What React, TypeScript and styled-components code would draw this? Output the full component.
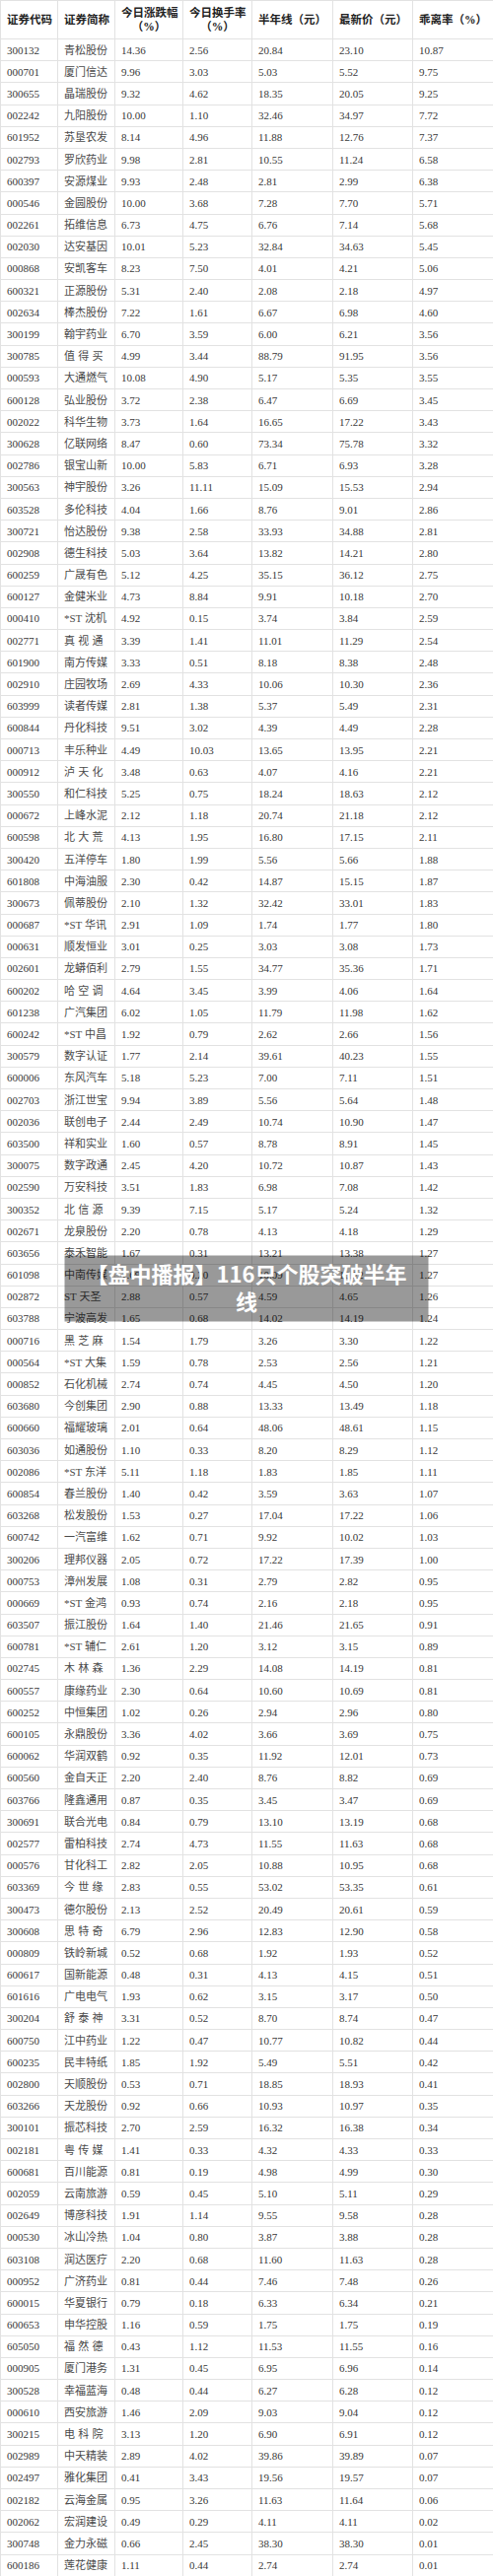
import React from "react";
import styled, { createGlobalStyle } from "styled-components";

const GlobalStyle = createGlobalStyle`
  html, body {
    margin: 0;
    padding: 0;
    background: #fff;
  }
`;

const Page = styled.div`
  position: relative;
  width: 500px;
`;

const Table = styled.table`
  width: 500px;
  border-collapse: collapse;
  table-layout: fixed;
  font-family: "Liberation Serif", "Noto Sans CJK SC", serif;
  color: #383838;
`;

const Col = styled.col<{ $w: number }>`
  width: ${(p) => p.$w}px;
`;

const HeadCell = styled.th`
  height: 38px;
  padding: 0 0 0 6px;
  border: 1px solid #e2e2e2;
  text-align: left;
  vertical-align: middle;
  font-size: 11.5px;
  font-weight: 700;
  line-height: 14px;
  color: #222;
  white-space: nowrap;
  overflow: hidden;
`;

const Unit = styled.span`
  display: block;
  margin-left: -6px;
  text-align: center;
`;

const Cell = styled.td`
  height: 21.2px;
  padding: 0 0 0 6px;
  border: 1px solid #e2e2e2;
  vertical-align: middle;
  font-size: 11px;
  line-height: 14px;
  white-space: nowrap;
  overflow: hidden;
`;

const Name = styled.span<{ $spread: boolean }>`
  display: inline-block;
  width: ${(p) => (p.$spread ? "3.6em" : "auto")};
  color: #4a4a4a;
  text-align: left;
  text-align-last: ${(p) => (p.$spread ? "justify" : "auto")};
`;

const Banner = styled.div`
  position: absolute;
  left: 50%;
  top: 50%;
  transform: translate(-50%, -50%);
  width: 369px;
  box-sizing: border-box;
  padding: 3px 20px 8px;
  background: rgba(0, 0, 0, 0.4);
  color: #fff;
  font-family: "Noto Sans CJK SC", sans-serif;
  font-weight: 700;
  font-size: 22px;
  line-height: 28px;
  text-align: center;
`;

const widths = [58, 58, 69, 70, 82, 81, 82];

const rows = `300132|青松股份|14.36|2.56|20.84|23.10|10.87
000701|厦门信达|9.96|3.03|5.03|5.52|9.75
300655|晶瑞股份|9.32|4.62|18.35|20.05|9.25
002242|九阳股份|10.00|1.10|32.46|34.97|7.72
601952|苏垦农发|8.14|4.96|11.88|12.76|7.37
002793|罗欣药业|9.98|2.81|10.55|11.24|6.58
600397|安源煤业|9.93|2.48|2.81|2.99|6.38
000546|金圆股份|10.00|3.68|7.28|7.70|5.71
002261|拓维信息|6.73|4.75|6.76|7.14|5.68
002030|达安基因|10.01|5.23|32.84|34.63|5.45
000868|安凯客车|8.23|7.50|4.01|4.21|5.06
600321|正源股份|5.31|2.40|2.08|2.18|4.97
002634|棒杰股份|7.22|1.61|6.67|6.98|4.60
300199|翰宇药业|6.70|3.59|6.00|6.21|3.56
300785|值得买|4.99|3.44|88.79|91.95|3.56
000593|大通燃气|10.08|4.90|5.17|5.35|3.55
600128|弘业股份|3.72|2.38|6.47|6.69|3.45
002022|科华生物|3.73|1.64|16.65|17.22|3.43
300628|亿联网络|8.47|0.60|73.34|75.78|3.32
002786|银宝山新|10.00|5.83|6.71|6.93|3.28
300563|神宇股份|3.26|11.11|15.09|15.53|2.94
603528|多伦科技|4.04|1.66|8.76|9.01|2.86
300721|怡达股份|9.38|2.58|33.93|34.88|2.81
002908|德生科技|5.03|3.64|13.82|14.21|2.80
600259|广晟有色|5.12|4.25|35.15|36.12|2.75
600127|金健米业|4.73|8.84|9.91|10.18|2.70
000410|*ST 沈机|4.92|0.15|3.74|3.84|2.59
002771|真视通|3.39|1.41|11.01|11.29|2.54
601900|南方传媒|3.33|0.51|8.18|8.38|2.48
002910|庄园牧场|2.69|4.33|10.06|10.30|2.36
603999|读者传媒|2.81|1.38|5.37|5.49|2.31
600844|丹化科技|9.51|3.02|4.39|4.49|2.28
000713|丰乐种业|4.49|10.03|13.65|13.95|2.21
000912|泸天化|3.48|0.63|4.07|4.16|2.21
300550|和仁科技|5.25|0.75|18.24|18.63|2.12
000672|上峰水泥|2.12|1.18|20.74|21.18|2.12
600598|北大荒|4.13|1.95|16.80|17.15|2.11
300420|五洋停车|1.80|1.99|5.56|5.66|1.88
601808|中海油服|2.30|0.42|14.87|15.15|1.87
300673|佩蒂股份|2.10|1.32|32.42|33.01|1.83
000687|*ST 华讯|2.91|1.09|1.74|1.77|1.80
000631|顺发恒业|3.01|0.25|3.03|3.08|1.73
002601|龙蟒佰利|2.79|1.55|34.77|35.36|1.71
600202|哈空调|4.64|3.45|3.99|4.06|1.64
601238|广汽集团|6.02|1.05|11.79|11.98|1.62
600242|*ST 中昌|1.92|0.79|2.62|2.66|1.56
300579|数字认证|1.77|2.14|39.61|40.23|1.55
600006|东风汽车|5.18|5.23|7.00|7.11|1.51
002703|浙江世宝|9.94|3.89|5.56|5.64|1.48
002036|联创电子|2.44|2.49|10.74|10.90|1.47
603500|祥和实业|1.60|0.57|8.78|8.91|1.45
300075|数字政通|2.45|4.20|10.72|10.87|1.43
002590|万安科技|3.51|1.83|6.98|7.08|1.42
300352|北信源|9.39|7.15|5.17|5.24|1.32
002671|龙泉股份|2.20|0.78|4.13|4.18|1.29
603656|泰禾智能|1.67|0.31|13.21|13.38|1.27
601098|中南传媒|1.69|0.20|10.09|10.22|1.27
002872|ST 天圣|2.88|0.57|4.59|4.65|1.26
603788|宁波高发|1.65|0.68|14.02|14.19|1.24
000716|黑芝麻|1.54|1.79|3.26|3.30|1.22
000564|*ST 大集|1.59|0.78|2.53|2.56|1.21
000852|石化机械|2.74|0.74|4.45|4.50|1.20
603680|今创集团|2.90|0.88|13.33|13.49|1.18
600660|福耀玻璃|2.01|0.64|48.06|48.61|1.15
603036|如通股份|1.10|0.33|8.20|8.29|1.12
002086|*ST 东洋|5.11|1.18|1.83|1.85|1.11
600854|春兰股份|1.40|0.42|3.59|3.63|1.07
603268|松发股份|1.53|0.27|17.04|17.22|1.06
600742|一汽富维|1.62|0.71|9.92|10.02|1.03
300206|理邦仪器|2.05|0.72|17.22|17.39|1.00
000753|漳州发展|1.08|0.31|2.79|2.82|0.95
000669|*ST 金鸿|0.93|0.74|2.16|2.18|0.95
603507|振江股份|1.64|1.40|21.46|21.65|0.91
600781|*ST 辅仁|2.61|1.20|3.12|3.15|0.89
002745|木林森|1.36|2.29|14.08|14.19|0.81
600557|康缘药业|2.30|0.64|10.60|10.69|0.81
600252|中恒集团|1.02|0.26|2.94|2.96|0.80
600105|永鼎股份|3.36|4.02|3.66|3.69|0.75
600062|华润双鹤|0.92|0.35|11.92|12.01|0.73
600560|金自天正|2.20|2.40|8.76|8.82|0.69
603766|隆鑫通用|0.87|0.35|3.45|3.47|0.69
300691|联合光电|0.84|0.79|13.10|13.19|0.68
002577|雷柏科技|2.74|4.73|11.55|11.63|0.68
000576|甘化科工|2.82|2.05|10.88|10.95|0.68
603369|今世缘|2.83|0.55|53.02|53.35|0.61
300473|德尔股份|2.13|2.52|20.49|20.61|0.59
300608|思特奇|6.79|2.96|12.83|12.90|0.58
000809|铁岭新城|0.52|0.68|1.92|1.93|0.52
600617|国新能源|0.48|0.31|4.13|4.15|0.51
601616|广电电气|1.93|0.62|3.15|3.17|0.50
300204|舒泰神|3.31|0.52|8.70|8.74|0.47
600750|江中药业|1.22|0.47|10.77|10.82|0.44
600235|民丰特纸|1.85|1.92|5.49|5.51|0.42
002800|天顺股份|0.53|0.71|18.85|18.93|0.41
603266|天龙股份|0.92|0.66|10.93|10.97|0.35
300101|振芯科技|2.70|2.59|16.32|16.38|0.34
002181|粤传媒|1.41|0.33|4.32|4.33|0.33
600681|百川能源|0.81|0.19|4.98|4.99|0.30
002059|云南旅游|0.59|0.45|5.10|5.11|0.29
002649|博彦科技|1.91|1.14|9.55|9.58|0.28
000530|冰山冷热|1.04|0.80|3.87|3.88|0.28
603108|润达医疗|2.20|0.68|11.60|11.63|0.28
000952|广济药业|0.81|0.44|7.46|7.48|0.26
600015|华夏银行|0.79|0.18|6.33|6.34|0.21
600653|申华控股|1.16|0.59|1.75|1.75|0.19
605050|福然德|0.43|1.12|11.53|11.55|0.16
000905|厦门港务|1.31|0.45|6.95|6.96|0.14
300528|幸福蓝海|0.48|0.44|6.27|6.28|0.12
000610|西安旅游|1.46|2.09|9.03|9.04|0.12
300215|电科院|3.13|1.20|6.90|6.91|0.12
002989|中天精装|2.89|4.02|39.86|39.89|0.07
002497|雅化集团|0.41|3.43|19.56|19.57|0.07
002182|云海金属|0.95|3.26|11.63|11.64|0.06
002062|宏润建设|0.49|0.29|4.11|4.11|0.02
300748|金力永磁|0.66|2.45|38.30|38.30|0.01
600186|莲花健康|1.11|0.44|2.74|2.74|0.01`
  .split("\n")
  .map((line) => line.split("|"));

function StockName({ name }: { name: string }) {
  const spread = name.length === 3 && !name.includes(" ");
  return <Name $spread={spread}>{spread ? name.split("").join(" ") : name}</Name>;
}

export default function App() {
  return (
    <Page>
      <GlobalStyle />
      <Table>
        <colgroup>
          {widths.map((w, i) => (
            <Col key={i} $w={w} />
          ))}
        </colgroup>
        <thead>
          <tr>
            <HeadCell>证券代码</HeadCell>
            <HeadCell>证券简称</HeadCell>
            <HeadCell>
              今日涨跌幅
              <Unit>（%）</Unit>
            </HeadCell>
            <HeadCell>
              今日换手率
              <Unit>（%）</Unit>
            </HeadCell>
            <HeadCell>半年线（元）</HeadCell>
            <HeadCell>最新价（元）</HeadCell>
            <HeadCell>乖离率（%）</HeadCell>
          </tr>
        </thead>
        <tbody>
          {rows.map(([code, name, ...nums]) => (
            <tr key={code}>
              <Cell>{code}</Cell>
              <Cell>
                <StockName name={name} />
              </Cell>
              {nums.map((n, i) => (
                <Cell key={i}>{n}</Cell>
              ))}
            </tr>
          ))}
        </tbody>
      </Table>
      <Banner>【盘中播报】116只个股突破半年线</Banner>
    </Page>
  );
}
